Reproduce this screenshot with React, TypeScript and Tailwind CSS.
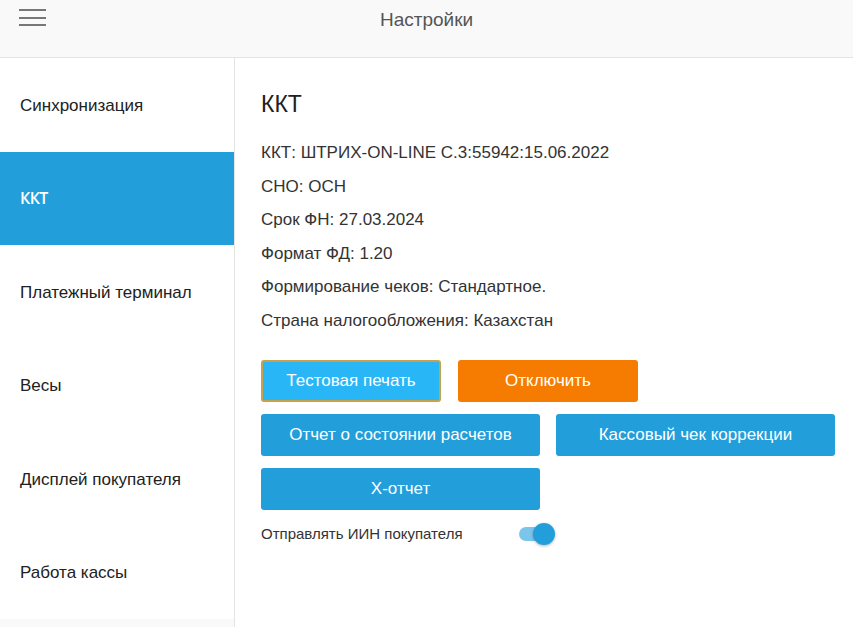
import { useState } from "react";

const menu = [
  "Синхронизация",
  "ККТ",
  "Платежный терминал",
  "Весы",
  "Дисплей покупателя",
  "Работа кассы",
];

const info = [
  "ККТ: ШТРИХ-ON-LINE С.3:55942:15.06.2022",
  "СНО: ОСН",
  "Срок ФН: 27.03.2024",
  "Формат ФД: 1.20",
  "Формирование чеков: Стандартное.",
  "Страна налогообложения: Казахстан",
];

export default function App() {
  const [sendIin, setSendIin] = useState(true);
  const active = "ККТ";

  return (
    <div className="flex h-[627px] w-[853px] flex-col overflow-hidden bg-white font-['Liberation_Sans',Arial,sans-serif] text-[#212121]">
      <header className="relative flex h-[58px] shrink-0 items-start justify-center border-b border-[#e4e4e4] bg-[#f9f9f9]">
        <button
          type="button"
          className="absolute left-[19px] top-[9px] flex flex-col gap-[5.5px] p-0"
          aria-label="Меню"
        >
          <span className="block h-[2px] w-[27px] bg-[#777]" />
          <span className="block h-[2px] w-[27px] bg-[#777]" />
          <span className="block h-[2px] w-[27px] bg-[#777]" />
        </button>
        <h1 className="mt-[8px] text-[19px] leading-[24px] text-[#555]">Настройки</h1>
      </header>

      <div className="flex min-h-0 flex-1">
        <nav className="flex w-[235px] shrink-0 flex-col border-r border-[#e4e4e4]">
          {menu.map((item) => (
            <div
              key={item}
              className={
                item === active
                  ? "flex h-[93.5px] shrink-0 items-center bg-[#229edb] pl-[20px] font-['Open_Sans',sans-serif] text-[16px] font-semibold tracking-[-0.6px] text-white"
                  : "flex h-[93.5px] shrink-0 items-center pl-[20px] pt-[1px] text-[17px] text-[#212121]"
              }
            >
              {item}
            </div>
          ))}
          <div className="flex-1 bg-[#f9f9f9]" />
        </nav>

        <main className="flex-1 pl-[26px] pt-[32px]">
          <h2 className="text-[23px] leading-[28px] text-[#212121]">ККТ</h2>
          <div className="mt-[25px] flex flex-col">
            {info.map((line) => (
              <p key={line} className="h-[33.5px] text-[17px] leading-[20px] text-[#333]">
                {line}
              </p>
            ))}
          </div>

          <div className="mt-[16px] flex flex-col gap-[12px]">
            <div className="flex gap-[17px]">
              <button
                type="button"
                className="h-[42px] w-[180px] rounded-[3px] border-2 border-[#c8a24a] bg-[#29b6f6] text-[17px] text-white"
              >
                Тестовая печать
              </button>
              <button
                type="button"
                className="h-[42px] w-[180px] rounded-[3px] bg-[#f57c00] text-[17px] text-white"
              >
                Отключить
              </button>
            </div>
            <div className="flex gap-[16px]">
              <button
                type="button"
                className="h-[42px] w-[279px] rounded-[3px] bg-[#229edb] text-[17px] text-white"
              >
                Отчет о состоянии расчетов
              </button>
              <button
                type="button"
                className="h-[42px] w-[279px] rounded-[3px] bg-[#229edb] text-[17px] text-white"
              >
                Кассовый чек коррекции
              </button>
            </div>
            <div className="flex">
              <button
                type="button"
                className="h-[42px] w-[279px] rounded-[3px] bg-[#229edb] text-[17px] text-white"
              >
                X-отчет
              </button>
            </div>
          </div>

          <div className="mt-[12px] flex items-center">
            <span className="w-[258px] text-[15px] text-[#333]">Отправлять ИИН покупателя</span>
            <button
              type="button"
              onClick={() => setSendIin(!sendIin)}
              className="relative h-[24px] w-[40px]"
              aria-label="Отправлять ИИН покупателя"
            >
              <span
                className={
                  sendIin
                    ? "absolute left-0 top-[5px] h-[14px] w-[34px] rounded-full bg-[#7cc5ea]"
                    : "absolute left-0 top-[5px] h-[14px] w-[34px] rounded-full bg-[#bdbdbd]"
                }
              />
              <span
                className={
                  sendIin
                    ? "absolute left-[14px] top-[1px] h-[22px] w-[22px] rounded-full bg-[#229edb] shadow-[0_1px_3px_rgba(0,0,0,0.3)]"
                    : "absolute left-[-4px] top-[1px] h-[22px] w-[22px] rounded-full bg-[#f5f5f5] shadow-[0_1px_3px_rgba(0,0,0,0.3)]"
                }
              />
            </button>
          </div>
        </main>
      </div>
    </div>
  );
}
